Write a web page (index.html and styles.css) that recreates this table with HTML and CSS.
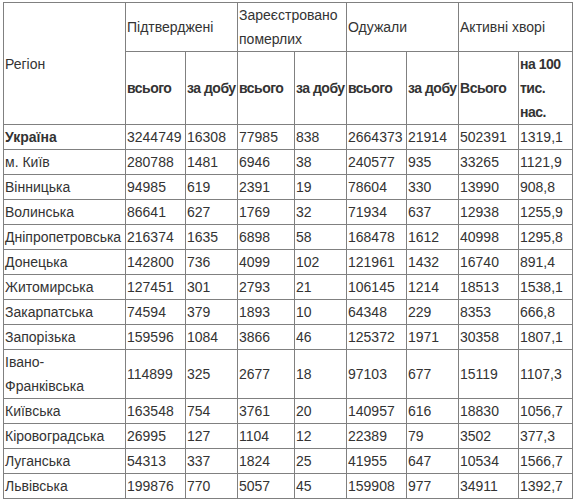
FILE: index.html
```html
<!DOCTYPE html>
<html lang="uk">
<head>
<meta charset="utf-8">
<link rel="stylesheet" href="styles.css">
</head>
<body>
<table class="stats">
  <colgroup>
    <col class="c-region">
    <col class="c60"><col class="c52">
    <col class="c57"><col class="c52">
    <col class="c60"><col class="c52">
    <col class="c60"><col class="c54">
  </colgroup>
  <thead>
    <tr>
      <td rowspan="2">Регіон</td>
      <td colspan="2">Підтверджені</td>
      <td colspan="2">Зареєстровано померлих</td>
      <td colspan="2">Одужали</td>
      <td colspan="2">Активні хворі</td>
    </tr>
    <tr class="sub">
      <td>всього</td><td>за добу</td>
      <td>всього</td><td>за добу</td>
      <td>всього</td><td>за добу</td>
      <td>Всього</td><td class="wrap">на 100 тис. нас.</td>
    </tr>
  </thead>
  <tbody>
    <tr><td class="b">Україна</td><td>3244749</td><td>16308</td><td>77985</td><td>838</td><td>2664373</td><td>21914</td><td>502391</td><td>1319,1</td></tr>
    <tr><td>м. Київ</td><td>280788</td><td>1481</td><td>6946</td><td>38</td><td>240577</td><td>935</td><td>33265</td><td>1121,9</td></tr>
    <tr><td>Вінницька</td><td>94985</td><td>619</td><td>2391</td><td>19</td><td>78604</td><td>330</td><td>13990</td><td>908,8</td></tr>
    <tr><td>Волинська</td><td>86641</td><td>627</td><td>1769</td><td>32</td><td>71934</td><td>637</td><td>12938</td><td>1255,9</td></tr>
    <tr><td>Дніпропетровська</td><td>216374</td><td>1635</td><td>6898</td><td>58</td><td>168478</td><td>1612</td><td>40998</td><td>1295,8</td></tr>
    <tr><td>Донецька</td><td>142800</td><td>736</td><td>4099</td><td>102</td><td>121961</td><td>1432</td><td>16740</td><td>891,4</td></tr>
    <tr><td>Житомирська</td><td>127451</td><td>301</td><td>2793</td><td>21</td><td>106145</td><td>1214</td><td>18513</td><td>1538,1</td></tr>
    <tr><td>Закарпатська</td><td>74594</td><td>379</td><td>1893</td><td>10</td><td>64348</td><td>229</td><td>8353</td><td>666,8</td></tr>
    <tr><td>Запорізька</td><td>159596</td><td>1084</td><td>3866</td><td>46</td><td>125372</td><td>1971</td><td>30358</td><td>1807,1</td></tr>
    <tr><td>Івано-<br>Франківська</td><td>114899</td><td>325</td><td>2677</td><td>18</td><td>97103</td><td>677</td><td>15119</td><td>1107,3</td></tr>
    <tr><td>Київська</td><td>163548</td><td>754</td><td>3761</td><td>20</td><td>140957</td><td>616</td><td>18830</td><td>1056,7</td></tr>
    <tr><td>Кіровоградська</td><td>26995</td><td>127</td><td>1104</td><td>12</td><td>22389</td><td>79</td><td>3502</td><td>377,3</td></tr>
    <tr><td>Луганська</td><td>54313</td><td>337</td><td>1824</td><td>25</td><td>41955</td><td>647</td><td>10534</td><td>1566,7</td></tr>
    <tr><td>Львівська</td><td>199876</td><td>770</td><td>5057</td><td>45</td><td>159908</td><td>977</td><td>34911</td><td>1392,7</td></tr>
  </tbody>
</table>
</body>
</html>
```
FILE: styles.css
```css
html, body {
  margin: 0;
  padding: 0;
  background: #ffffff;
}
body {
  padding: 2px 0 0 3px;
  font-family: "Liberation Sans", Arial, sans-serif;
  font-size: 14px;
  color: #333333;
}
.stats {
  border-collapse: collapse;
  table-layout: fixed;
  width: 570px;
}
.stats td {
  border: 1px solid #808080;
  padding: 0 0 0 1px;
  line-height: 24px;
  vertical-align: middle;
  text-align: left;
  white-space: nowrap;
}
.stats thead tr:first-child td,
.stats .wrap,
.stats tbody td:first-child {
  white-space: normal;
}
.stats .sub td,
.stats .b {
  font-weight: bold;
}
.stats .sub td {
  letter-spacing: -0.5px;
}
.c-region { width: 122px; }
.c60 { width: 60px; }
.c52 { width: 52px; }
.c57 { width: 57px; }
.c54 { width: 54px; }
```
